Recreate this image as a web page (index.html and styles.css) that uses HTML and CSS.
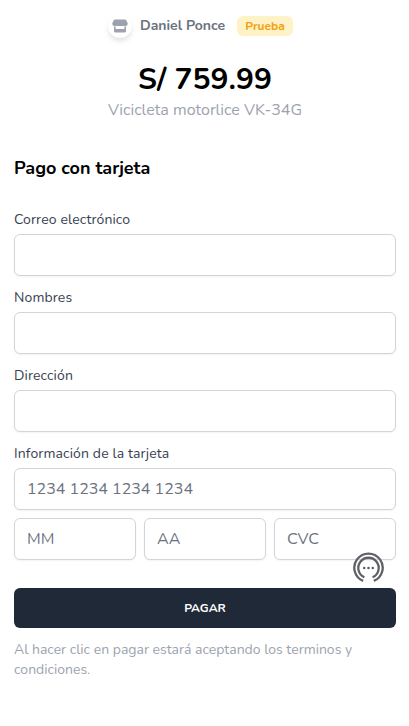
FILE: index.html
```html
<!DOCTYPE html>
<html lang="es">
<head>
<meta charset="utf-8">
<meta name="viewport" content="width=device-width, initial-scale=1">
<title>Pago con tarjeta</title>
<link rel="stylesheet" href="styles.css">
</head>
<body>
<main class="checkout">
  <header class="merchant">
    <span class="avatar">
      <svg viewBox="0 0 16 14" width="16" height="14" aria-hidden="true">
        <path fill="#9ca3af" d="M3 .5h10c.5 0 .9.2 1.100.6l1.400 2.700c.6 1.500-.2 3.100-1.700 3.100H2.200C.7 6.900-.1 5.300.5 3.800L1.900 1.100C2.100.7 2.500.5 3 .5Z"/>
        <path fill="#9ca3af" d="M2 7.500h1.600V10h8.800V7.500H14v4.700c0 .7-.5 1.200-1.200 1.200H3.200c-.7 0-1.200-.5-1.200-1.200Z"/>
      </svg>
    </span>
    <span class="merchant-name">Daniel Ponce</span>
    <span class="badge">Prueba</span>
  </header>
  <section class="summary">
    <h1 class="amount">S/ 759.99</h1>
    <p class="product">Vicicleta motorlice VK-34G</p>
  </section>
  <form class="form">
    <h2 class="title">Pago con tarjeta</h2>
    <label class="label" for="email">Correo electrónico</label>
    <input class="input" id="email" type="email">
    <label class="label" for="name">Nombres</label>
    <input class="input" id="name" type="text">
    <label class="label" for="address">Dirección</label>
    <input class="input" id="address" type="text">
    <label class="label" for="card">Información de la tarjeta</label>
    <input class="input card" id="card" type="text" placeholder="1234 1234 1234 1234">
    <div class="row">
      <input class="input" type="text" placeholder="MM" aria-label="Mes">
      <input class="input" type="text" placeholder="AA" aria-label="Año">
      <input class="input" type="text" placeholder="CVC" aria-label="CVC">
    </div>
    <button class="pay" type="button">PAGAR</button>
    <p class="terms">Al hacer clic en pagar estará aceptando los terminos y condiciones.</p>
  </form>
</main>
<svg class="chat" viewBox="0 0 32 31" width="32" height="31" aria-hidden="true">
  <g fill="none" stroke="#5f6164" stroke-width="2.300">
    <path d="M10.200 28.900A14.200 14.200 0 1 1 20.800 28.900"/>
    <path d="M11.400 25.300A10.200 10.200 0 1 1 19.600 25.300"/>
  </g>
  <g fill="#5f6164"><circle cx="11.200" cy="16" r="1.300"/><circle cx="15.500" cy="16" r="1.300"/><circle cx="19.800" cy="16" r="1.300"/></g>
</svg>
</body>
</html>
```
FILE: styles.css
```css
* { box-sizing: border-box; }
body {
  margin: 0;
  background: #fff;
  color: #000;
  font-family: Nunito, Lato, "Open Sans", sans-serif;
}
h1, h2, p { margin: 0; }
.checkout { padding: 14px 13px 0 14px; }
.merchant {
  display: flex;
  align-items: center;
  justify-content: center;
  height: 24px;
  padding-right: 9px;
}
.avatar {
  display: flex;
  align-items: center;
  justify-content: center;
  width: 24px;
  height: 24px;
  border-radius: 50%;
  box-shadow: 0 4px 6px -1px rgba(0,0,0,.1), 0 2px 4px -1px rgba(0,0,0,.06);
}
.merchant-name {
  width: 85px;
  margin: 0 12px 0 8px;
  color: #6b7280;
  font-size: 14px;
  font-weight: 700;
  line-height: 20px;
  white-space: nowrap;
}
.badge {
  width: 56px;
  border-radius: 6px;
  background: #fef3c7;
  color: #f59e0b;
  font-size: 12px;
  font-weight: 700;
  line-height: 20px;
  text-align: center;
}
.summary { padding-top: 24px; text-align: center; }
.amount { font-size: 30px; font-weight: 700; line-height: 36px; }
.product { color: #9ca3af; font-size: 16px; line-height: 24px; }
.form { padding-top: 32px; }
.title { margin-bottom: 28px; font-size: 18px; font-weight: 700; line-height: 28px; }
.label {
  display: block;
  margin-bottom: 4px;
  color: #374151;
  font-size: 14px;
  letter-spacing: .13px;
  line-height: 20px;
}
.input {
  display: block;
  width: 100%;
  height: 42px;
  margin: 0 0 12px;
  padding: 8px 12px;
  border: 1px solid #d1d5db;
  border-radius: 6px;
  background: #fff;
  box-shadow: 0 1px 2px rgba(0,0,0,.05);
  font: 16px/24px Nunito, Lato, "Open Sans", sans-serif;
}
.input::placeholder { color: #6b7280; opacity: 1; }
.input.card { margin-bottom: 8px; }
.row { display: grid; grid-template-columns: repeat(3, 1fr); gap: 8px; }
.row .input { margin: 0; }
.pay {
  display: block;
  width: 100%;
  height: 40px;
  margin-top: 28px;
  padding: 0;
  border: 0;
  border-radius: 6px;
  background: #1f2937;
  color: #fff;
  font: 700 12px/16px Nunito, Lato, "Open Sans", sans-serif;
}
.terms { margin-top: 12px; color: #9ca3af; font-size: 14px; line-height: 20px; }
.chat { position: fixed; top: 552px; left: 353px; }
```
